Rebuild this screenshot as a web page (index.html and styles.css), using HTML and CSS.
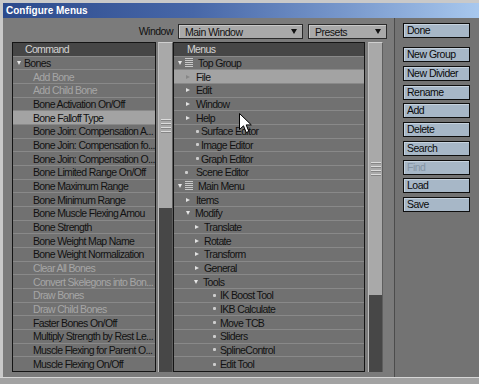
FILE: index.html
```
<!DOCTYPE html>
<html>
<head>
<meta charset="utf-8">
<link rel="stylesheet" href="styles.css">
</head>
<body>
<div class="window">
  <div class="titlebar">Configure Menus</div>
  <div class="client">
    <div class="main">
      <div class="toolbar">
        <div class="label">Window</div>
        <div class="dropdown wide"><span>Main Window</span><i class="dd-arrow"></i></div>
        <div class="dropdown narrow"><span>Presets</span><i class="dd-arrow"></i></div>
      </div>
      <div class="panes">
        <div class="list cmd">
          <div class="row hdr c-h">Command</div>
          <div class="row c0"><i class="tri-d"></i><span>Bones</span></div>
          <div class="row c1 dis">Add Bone</div>
          <div class="row c1 dis">Add Child Bone</div>
          <div class="row c1">Bone Activation On/Off</div>
          <div class="row c1 sel">Bone Falloff Type</div>
          <div class="row c1">Bone Join: Compensation A...</div>
          <div class="row c1">Bone Join: Compensation fo...</div>
          <div class="row c1">Bone Join: Compensation O...</div>
          <div class="row c1">Bone Limited Range On/Off</div>
          <div class="row c1">Bone Maximum Range</div>
          <div class="row c1">Bone Minimum Range</div>
          <div class="row c1">Bone Muscle Flexing Amou</div>
          <div class="row c1">Bone Strength</div>
          <div class="row c1">Bone Weight Map Name</div>
          <div class="row c1">Bone Weight Normalization</div>
          <div class="row c1 dis">Clear All Bones</div>
          <div class="row c1 dis">Convert Skelegons into Bon...</div>
          <div class="row c1 dis">Draw Bones</div>
          <div class="row c1 dis">Draw Child Bones</div>
          <div class="row c1">Faster Bones On/Off</div>
          <div class="row c1">Multiply Strength by Rest Le...</div>
          <div class="row c1">Muscle Flexing for Parent O...</div>
          <div class="row c1">Muscle Flexing On/Off</div>
        </div>
        <div class="sb sb-cmd"><div class="thumb"><div class="grip"></div></div></div>
        <div class="list menus">
          <div class="row hdr m-h">Menus</div>
          <div class="row m0"><i class="tri-d"></i><i class="lines"></i><span>Top Group</span></div>
          <div class="row m1a sel"><i class="tri-r"></i><span>File</span></div>
          <div class="row m1a"><i class="tri-r"></i><span>Edit</span></div>
          <div class="row m1a"><i class="tri-r"></i><span>Window</span></div>
          <div class="row m1a"><i class="tri-r"></i><span>Help</span></div>
          <div class="row m2b"><i class="dot"></i><span>Surface Editor</span></div>
          <div class="row m2b"><i class="dot"></i><span>Image Editor</span></div>
          <div class="row m2b"><i class="dot"></i><span>Graph Editor</span></div>
          <div class="row m1b"><i class="dot"></i><span>Scene Editor</span></div>
          <div class="row m0"><i class="tri-d"></i><i class="lines"></i><span>Main Menu</span></div>
          <div class="row m1a"><i class="tri-r"></i><span>Items</span></div>
          <div class="row m1d"><i class="tri-d"></i><span>Modify</span></div>
          <div class="row m2a"><i class="tri-r"></i><span>Translate</span></div>
          <div class="row m2a"><i class="tri-r"></i><span>Rotate</span></div>
          <div class="row m2a"><i class="tri-r"></i><span>Transform</span></div>
          <div class="row m2a"><i class="tri-r"></i><span>General</span></div>
          <div class="row m2d"><i class="tri-d"></i><span>Tools</span></div>
          <div class="row m3"><i class="dot"></i><span>IK Boost Tool</span></div>
          <div class="row m3"><i class="dot"></i><span>IKB Calculate</span></div>
          <div class="row m3"><i class="dot"></i><span>Move TCB</span></div>
          <div class="row m3"><i class="dot"></i><span>Sliders</span></div>
          <div class="row m3"><i class="dot"></i><span>SplineControl</span></div>
          <div class="row m3"><i class="dot"></i><span>Edit Tool</span></div>
        </div>
        <div class="sb sb-menus"><div class="thumb"><div class="grip"></div></div></div>
      </div>
    </div>
    <div class="side">
      <div class="btn done">Done</div>
      <div class="btn">New Group</div>
      <div class="btn">New Divider</div>
      <div class="btn">Rename</div>
      <div class="btn">Add</div>
      <div class="btn">Delete</div>
      <div class="btn">Search</div>
      <div class="btn off">Find</div>
      <div class="btn">Load</div>
      <div class="btn">Save</div>
    </div>
  </div>
  <div class="footer"></div>
</div>
<svg class="cursor" width="14" height="21" viewBox="0 0 14 21"><path d="M0.5 0.5 V16.5 L4.5 12.8 L7.2 19.5 L9.8 18.4 L7.2 11.9 H12.3 Z" fill="#fff" stroke="#000" stroke-width="1"/></svg>
</body>
</html>
```
FILE: styles.css
```
* { box-sizing: border-box; }
body {
  margin: 0;
  width: 479px;
  height: 384px;
  overflow: hidden;
  position: relative;
  background: #c9c9c9;
  font-family: "Liberation Sans", Arial, sans-serif;
  font-size: 10.5px;
  letter-spacing: -0.5px;
  color: #111;
}
.window {
  display: flex;
  flex-direction: column;
  height: 384px;
  padding: 3px 0 0 3px;
}
.titlebar {
  height: 15px;
  line-height: 15px;
  padding-left: 3px;
  color: #fff;
  font-weight: bold;
  font-size: 10px;
  letter-spacing: 0;
  background: linear-gradient(90deg, #2c4a8c 0%, #4767a8 40%, #7898cc 72%, #a8c8ee 100%);
}
.client {
  display: flex;
  height: 359px;
}
.main {
  width: 391px;
  background: #7b7b7b;
  padding: 6px 0 0 9px;
}
.side {
  flex: 1;
  background: #737373;
  border-left: 1px solid #4c4c4c;
  padding: 5px 0 0 8px;
  display: flex;
  flex-direction: column;
  gap: 3.75px;
}
.footer {
  height: 7px;
  margin-left: -3px;
  border-top: 1px solid #d6d6d6;
  background: #a2a2a2;
}
.toolbar {
  display: flex;
  height: 15px;
  gap: 5px;
  margin-bottom: 3px;
}
.label {
  width: 161px;
  text-align: right;
  line-height: 15px;
}
.dropdown {
  display: flex;
  align-items: center;
  justify-content: space-between;
  padding: 0 5px 0 6px;
  background: #a9a9a9;
  border: 1px solid #2a2a2a;
  box-shadow: inset 1px 1px 0 #c9c9c9;
}
.dropdown.wide { width: 125px; }
.dropdown.narrow { width: 79px; }
.dd-arrow {
  width: 0;
  height: 0;
  border-left: 3.5px solid transparent;
  border-right: 3.5px solid transparent;
  border-top: 5px solid #111;
}
.panes {
  display: flex;
  height: 330px;
}
.list {
  border: 1px solid #141414;
  background: #717171;
  display: grid;
  grid-template-rows: repeat(24, 1fr);
  overflow: hidden;
  letter-spacing: -0.65px;
}
.cmd { width: 144px; margin-right: 2px; }
.menus { width: 192px; margin-right: 3px; }
.row {
  display: flex;
  align-items: center;
  white-space: nowrap;
  overflow: hidden;
  border-bottom: 1px solid #898989;
  min-height: 0;
}
.row:last-child { border-bottom: none; }
.hdr { background: #464646; color: #d4d4d4; }
.sel { background: #a3a3a3; }
.dis { color: #a6a6a6; }
.c-h { padding-left: 12px; }
.m-h { padding-left: 13px; }
.c0 { padding-left: 4px; }
.c0 .tri-d { margin-right: 3px; }
.c1 { padding-left: 20px; }
.tri-d {
  flex: none;
  width: 0;
  height: 0;
  border-left: 2.5px solid transparent;
  border-right: 2.5px solid transparent;
  border-top: 4px solid #e6e6e6;
}
.tri-r {
  flex: none;
  width: 0;
  height: 0;
  border-top: 2.5px solid transparent;
  border-bottom: 2.5px solid transparent;
  border-left: 4px solid #e2e2e2;
}
.sel .tri-r { border-left-color: #878787; }
.lines {
  flex: none;
  width: 8px;
  height: 9px;
  background: repeating-linear-gradient(#c8c8c8 0 1px, transparent 1px 2px);
}
.dot {
  flex: none;
  width: 3px;
  height: 3px;
  border-radius: 1px;
  background: #cdcdcd;
}
.m0 { padding-left: 4px; }
.m0 .tri-d { margin-right: 3px; }
.m0 .lines { margin-right: 5px; }
.m1a { padding-left: 12px; }
.m1a .tri-r { margin-right: 6px; }
.m1d { padding-left: 12px; }
.m1d .tri-d { margin-right: 5px; }
.m1b { padding-left: 11px; }
.m1b .dot { margin-right: 8px; }
.m2b { padding-left: 22px; }
.m2b .dot { margin-right: 2px; }
.m2a { padding-left: 21px; }
.m2a .tri-r { margin-right: 5px; }
.m2d { padding-left: 20px; }
.m2d .tri-d { margin-right: 5px; }
.m3 { padding-left: 39px; }
.m3 .dot { margin-right: 4px; }
.sb {
  width: 15px;
  display: flex;
  flex-direction: column;
  background: #474747;
  border-top: 1px solid #cfcfcf;
  border-left: 1px solid #bdbdbd;
  border-right: 1px solid #5e5e5e;
}
.thumb {
  background: #a9a9a9;
  display: flex;
  align-items: center;
  justify-content: center;
}
.sb-cmd .thumb { height: 165px; }
.sb-menus .thumb { height: 252px; }
.grip {
  width: 10px;
  height: 14px;
  background: repeating-linear-gradient(#dcdcdc 0 1px, #858585 1px 2px, transparent 2px 4px);
}
.btn {
  width: 67px;
  height: 15px;
  line-height: 13px;
  padding-left: 3px;
  background: #a7b7c7;
  border: 1px solid #0e0e0e;
  box-shadow: inset 1px 1px 0 #c7d3df;
  color: #0a0a0a;
}
.btn.done { margin-bottom: 5.25px; }
.btn.off { color: #8494a4; }
.cursor {
  position: absolute;
  left: 239px;
  top: 113px;
}
```
